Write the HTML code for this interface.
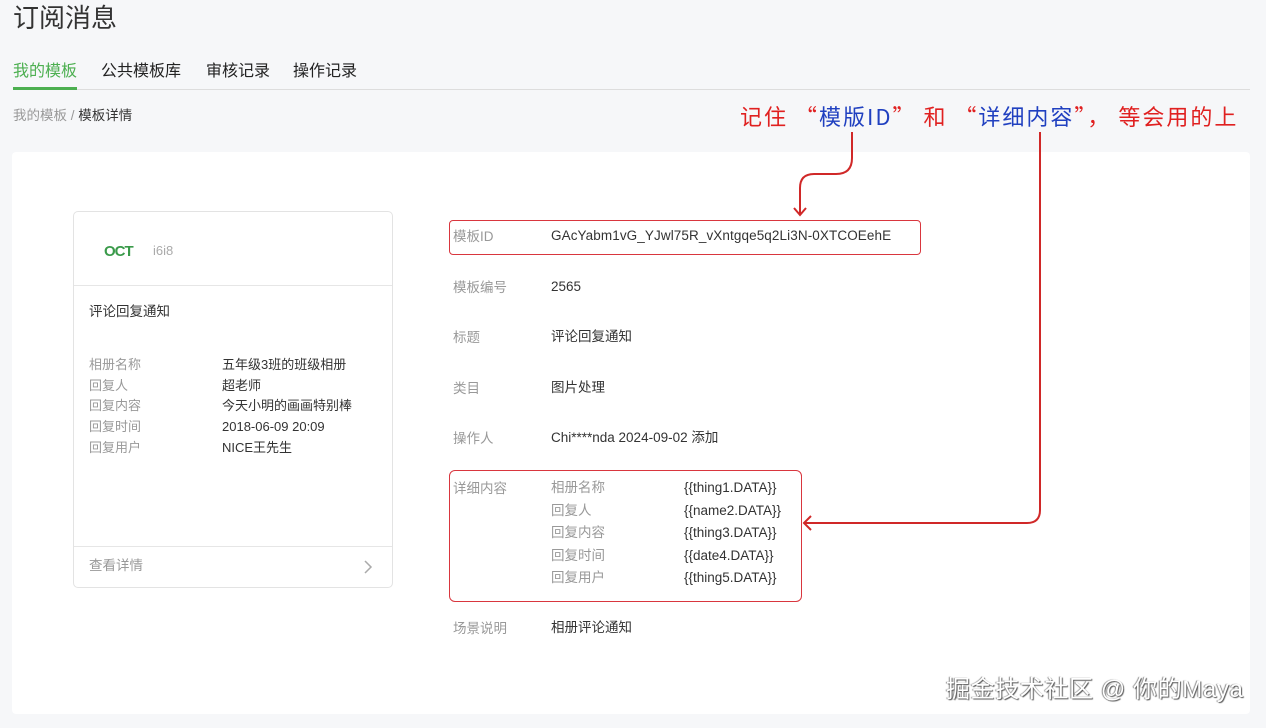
<!DOCTYPE html>
<html><head><meta charset="utf-8"><style>
*{margin:0;padding:0;box-sizing:border-box}
body{width:1266px;height:728px;background:#f6f7f9;font-family:"Liberation Sans","Noto Sans CJK SC",sans-serif;position:relative;overflow:hidden;color:#333}
.a{position:absolute;white-space:nowrap;line-height:1}
.g{color:#999}
</style></head><body>
<div class="a" style="left:13px;top:5px;font-size:26px;color:#333">订阅消息</div>
<div class="a" style="left:13px;top:64px;font-size:16px;color:#4caf50">我的模板</div>
<div class="a" style="left:101px;top:64px;font-size:16px;color:#222">公共模板库</div>
<div class="a" style="left:206px;top:64px;font-size:16px;color:#222">审核记录</div>
<div class="a" style="left:293px;top:64px;font-size:16px;color:#222">操作记录</div>
<div class="a" style="left:13px;top:89px;width:1237px;height:1px;background:#ddd"></div>
<div class="a" style="left:13px;top:87px;width:64px;height:3px;background:#4caf50"></div>
<div class="a" style="left:13px;top:109px;font-size:13.5px"><span class="g">我的模板 / </span>模板详情</div>
<div class="a" style="left:740px;top:105px;font-size:22px;letter-spacing:2px;color:#e02020;font-family:'Noto Sans CJK SC',sans-serif">记住 “<span style="color:#2040c0">模版ID</span>” 和 “<span style="color:#2040c0">详细内容</span>”， 等会用的上</div>

<div class="a" style="left:12px;top:152px;width:1238px;height:562px;background:#fff;border-radius:4px"></div>

<div class="a" style="left:73px;top:211px;width:320px;height:377px;border:1px solid #e3e3e3;border-radius:5px;background:#fff"></div>
<div class="a" style="left:104px;top:244px;font-size:15px;font-weight:bold;color:#3a9a4a;letter-spacing:-1px">OCT</div>
<div class="a g" style="left:153px;top:244px;font-size:13px;color:#aaa">i6i8</div>
<div class="a" style="left:74px;top:285px;width:318px;height:1px;background:#e6e6e6"></div>
<div class="a" style="left:89px;top:305px;font-size:13.5px">评论回复通知</div>
<div class="a g" style="left:89px;top:355px;font-size:13px;line-height:20.7px;white-space:pre">相册名称
回复人
回复内容
回复时间
回复用户</div>
<div class="a" style="left:222px;top:355px;font-size:13px;line-height:20.7px;white-space:pre">五年级3班的班级相册
超老师
今天小明的画画特别棒
2018-06-09 20:09
NICE王先生</div>
<div class="a" style="left:74px;top:546px;width:318px;height:1px;background:#e6e6e6"></div>
<div class="a g" style="left:89px;top:559px;font-size:13.5px">查看详情</div>
<svg class="a" style="left:362px;top:559px" width="12" height="16"><path d="M3 2l6 6-6 6" stroke="#aaa" stroke-width="1.5" fill="none"/></svg>

<div class="a" style="left:449px;top:220px;width:472px;height:35px;border:1px solid #d9363e;border-radius:4px"></div>
<div class="a" style="left:449px;top:470px;width:353px;height:132px;border:1px solid #d9363e;border-radius:6px"></div>

<div class="a g" style="left:453px;top:230px;font-size:13.5px">模板ID</div>
<div class="a" style="left:551px;top:229px;font-size:13.5px;letter-spacing:0.1px">GAcYabm1vG_YJwl75R_vXntgqe5q2Li3N-0XTCOEehE</div>
<div class="a g" style="left:453px;top:281px;font-size:13.5px">模板编号</div>
<div class="a" style="left:551px;top:280px;font-size:13.5px">2565</div>
<div class="a g" style="left:453px;top:331px;font-size:13.5px">标题</div>
<div class="a" style="left:551px;top:330px;font-size:13.5px">评论回复通知</div>
<div class="a g" style="left:453px;top:382px;font-size:13.5px">类目</div>
<div class="a" style="left:551px;top:381px;font-size:13.5px">图片处理</div>
<div class="a g" style="left:453px;top:432px;font-size:13.5px">操作人</div>
<div class="a" style="left:551px;top:431px;font-size:13.5px">Chi****nda 2024-09-02 添加</div>
<div class="a g" style="left:453px;top:482px;font-size:13.5px">详细内容</div>
<div class="a g" style="left:551px;top:477px;font-size:13.5px;line-height:22.5px;white-space:pre">相册名称
回复人
回复内容
回复时间
回复用户</div>
<div class="a" style="left:684px;top:477px;font-size:13.5px;line-height:22.5px;white-space:pre">{{thing1.DATA}}
{{name2.DATA}}
{{thing3.DATA}}
{{date4.DATA}}
{{thing5.DATA}}</div>
<div class="a g" style="left:453px;top:622px;font-size:13.5px">场景说明</div>
<div class="a" style="left:551px;top:621px;font-size:13.5px">相册评论通知</div>

<svg class="a" style="left:0;top:0" width="1266" height="728">
<g stroke="#d02828" stroke-width="2" fill="none">
<path d="M852 132V158Q852 174 836 174H814Q800 174 800 188V215"/>
<path d="M794 208l6 7 6-7"/>
<path d="M1040 132V510Q1040 523 1027 523H804"/>
<path d="M811 516l-7 7 7 7"/>
</g></svg>
<div class="a" style="left:946px;top:678px;font-size:24px;letter-spacing:0.6px;color:#fff;text-shadow:1px 1px 1px #555,-1px 0 1px #888">掘金技术社区 @ 你的Maya</div>
</body></html>
